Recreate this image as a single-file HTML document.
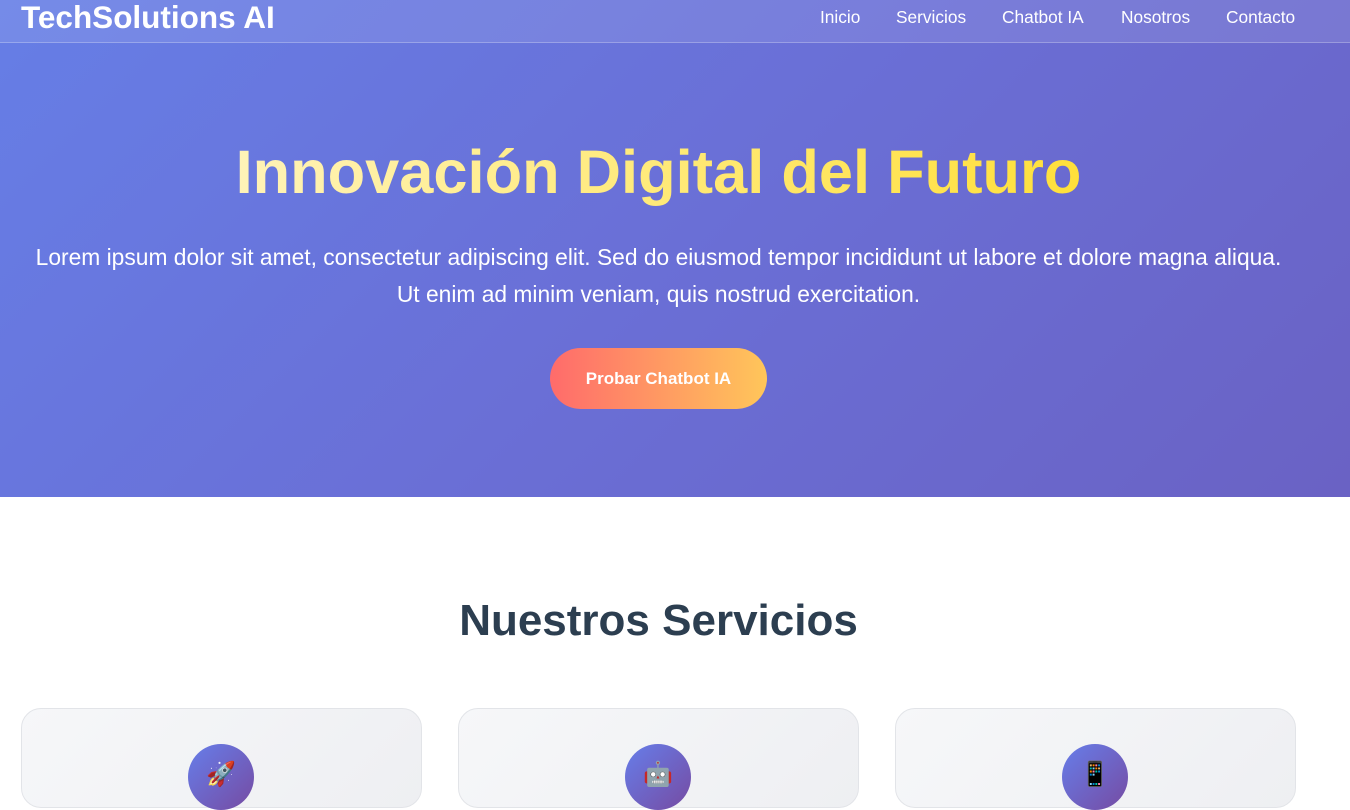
<!DOCTYPE html>
<html><head><meta charset="utf-8"><style>
*{margin:0;padding:0;box-sizing:border-box}
body{width:1350px;height:784px;overflow:hidden;font-family:"Liberation Sans",sans-serif;background:#fff}
.hero{position:absolute;left:0;top:0;width:1350px;height:497px;background:linear-gradient(135deg,#667ee6 0%,#6a6fd6 50%,#6a62c4 100%)}
.nav{position:absolute;left:0;top:0;width:1350px;height:43px;background:rgba(255,255,255,0.1);border-bottom:1px solid rgba(255,255,255,0.25)}
.logo{position:absolute;left:21px;top:0px;font-size:31.5px;font-weight:bold;color:#fff;line-height:34px}
.links{position:absolute;top:7px;font-size:17.3px;color:#fff}
.links span{position:absolute;white-space:nowrap}
h1{position:absolute;left:0;width:1317px;top:138px;text-align:center;font-size:61.4px;font-weight:bold;line-height:70px}
h1 span{background:linear-gradient(90deg,#fff3b8,#ffe03a);-webkit-background-clip:text;color:transparent}
.p{position:absolute;left:0;width:1317px;top:239px;text-align:center;color:#fff;font-size:22.8px;line-height:37px}
.btn{position:absolute;left:550px;top:348px;width:217px;height:61px;border-radius:31px;background:linear-gradient(90deg,#ff6b6b,#ffc65a);color:#fff;font-weight:bold;font-size:17px;text-align:center;line-height:61px}
h2{position:absolute;left:0;width:1317px;top:596px;text-align:center;font-size:44px;color:#2c3e50;font-weight:bold}
.card{position:absolute;top:708px;width:401px;height:100px;border:1px solid #e2e4e8;border-radius:20px;background:linear-gradient(135deg,#f6f7f9,#eeeff2)}
.ic{position:absolute;left:166px;top:35px;width:66px;height:66px;border-radius:50%;background:linear-gradient(135deg,#667eea,#764ba2);text-align:center;line-height:62px;font-size:24px}
</style></head><body>
<div class="hero">
<div class="nav"><div class="logo">TechSolutions AI</div>
<div class="links"><span style="left:820px">Inicio</span><span style="left:896px">Servicios</span><span style="left:1002px">Chatbot IA</span><span style="left:1121px">Nosotros</span><span style="left:1226px">Contacto</span></div></div>
<h1><span>Innovación Digital del Futuro</span></h1>
<div class="p">Lorem ipsum dolor sit amet, consectetur adipiscing elit. Sed do eiusmod tempor incididunt ut labore et dolore magna aliqua.<br>Ut enim ad minim veniam, quis nostrud exercitation.</div>
<div class="btn">Probar Chatbot IA</div>
</div>
<h2>Nuestros Servicios</h2>
<div class="card" style="left:21px"><div class="ic">🚀</div></div>
<div class="card" style="left:458px"><div class="ic">🤖</div></div>
<div class="card" style="left:895px"><div class="ic">📱</div></div>
</body></html>
